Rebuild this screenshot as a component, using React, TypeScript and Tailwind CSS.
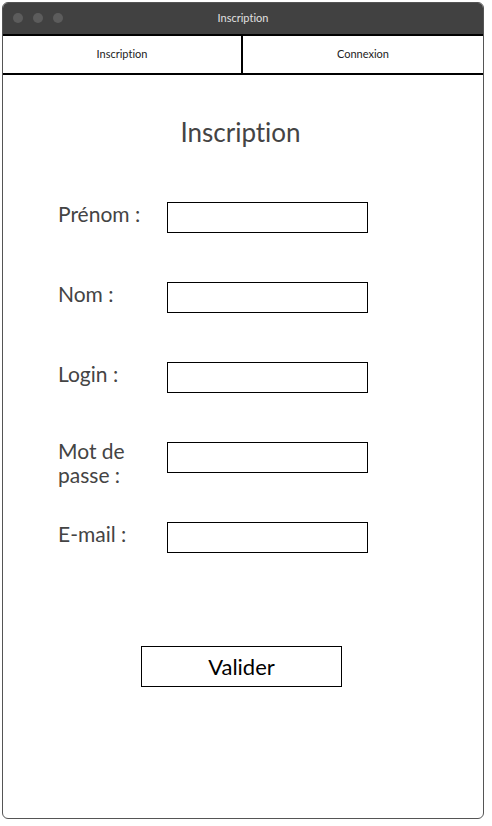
import React from 'react';

const fields: { label: React.ReactNode; offset: string }[] = [
  { label: 'Prénom :', offset: 'mt-0' },
  { label: 'Nom :', offset: 'mt-0' },
  { label: 'Login :', offset: 'mt-0' },
  { label: 'Mot de passe :', offset: '-mt-[3px]' },
  { label: 'E-mail :', offset: 'mt-0' },
];

const App: React.FC = () => {
  return (
    <div className="w-[492px] h-[826px] bg-white p-[2px] font-['Lato',sans-serif] [font-variant-ligatures:none]">
      <div className="w-[482px] h-[817px] flex flex-col border border-[#555] rounded-[6px] overflow-hidden bg-white">
        {/* title bar */}
        <div className="relative h-[33px] bg-[#414141] flex items-center justify-center border-b-2 border-black">
          <div className="absolute left-[10px] top-[10px] flex gap-[10px]">
            <span className="w-[10px] h-[10px] rounded-full bg-[#5c5c5c]" />
            <span className="w-[10px] h-[10px] rounded-full bg-[#5c5c5c]" />
            <span className="w-[10px] h-[10px] rounded-full bg-[#5c5c5c]" />
          </div>
          <span className="text-[11px] text-[#e0e0e0]">Inscription</span>
        </div>

        {/* tabs */}
        <nav className="flex h-[39px] border-b-2 border-black">
          <div className="w-[240px] flex items-center justify-center border-r-2 border-black text-[11px] text-[#222]">
            Inscription
          </div>
          <div className="flex-1 flex items-center justify-center text-[11px] text-[#222]">
            Connexion
          </div>
        </nav>

        <main className="flex flex-col">
          <h1 className="mt-[41px] text-center text-[26px] leading-[32px] text-[#444] pr-[5px]">Inscription</h1>

          <div className="mt-[54px] pl-[55px] flex flex-col">
            {fields.map((f, i) => (
              <div key={i} className="h-[80px] flex items-start">
                <label className={`w-[109px] pr-[10px] text-[21px] leading-[24px] text-[#444] ${f.offset}`}>{f.label}</label>
                <input className="w-[201px] h-[31px] border border-black outline-none" />
              </div>
            ))}
          </div>

          <div className="mt-[44px] flex justify-center pr-[3px]">
            <button className="w-[201px] h-[41px] border border-black text-[22px] text-black">Valider</button>
          </div>
        </main>
      </div>
    </div>
  );
};

export default App;
